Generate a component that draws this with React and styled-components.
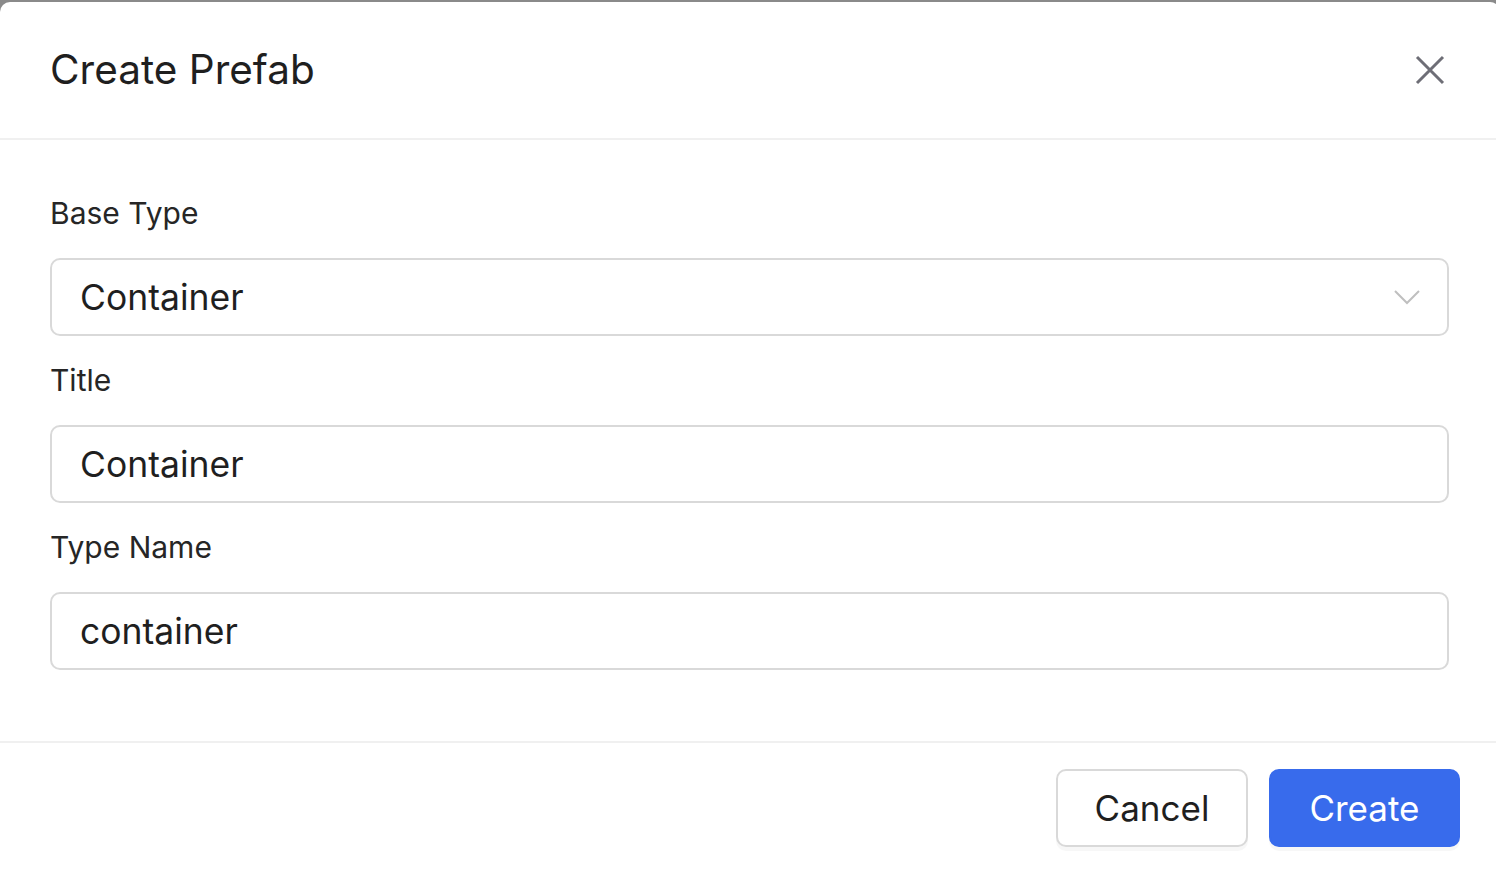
import React from 'react'
import styled, { createGlobalStyle } from 'styled-components'

const GlobalStyle = createGlobalStyle`
  html, body {
    margin: 0;
    padding: 0;
    background: #8a8a8a;
    font-family: Inter, "Noto Sans", sans-serif;
    overflow: hidden;
  }
`

const Modal = styled.div`
  margin: 2px -4px 0 0;
  height: calc(100vh - 2px);
  background: #fff;
  border-radius: 10px 10px 0 0;
  display: flex;
  flex-direction: column;
  color: #1f1f1f;
`

const Header = styled.div`
  height: 136px;
  padding: 0 54px 0 50px;
  display: flex;
  align-items: center;
  justify-content: space-between;
  border-bottom: 2px solid #f0f0f0;
`

const Title = styled.div`
  font-size: 40.5px;
  line-height: 48px;
  color: #1f1f1f;
`

const CloseButton = styled.button`
  border: none;
  background: none;
  padding: 0;
  width: 32px;
  height: 32px;
  display: flex;
  align-items: center;
  justify-content: center;
  cursor: pointer;
`

const Body = styled.div`
  padding: 53px 51px 71px 50px;
  display: flex;
  flex-direction: column;
  gap: 24px;
  border-bottom: 2px solid #f0f0f0;
`

const Field = styled.div`
  display: flex;
  flex-direction: column;
  gap: 25px;
`

const Label = styled.div`
  font-size: 30px;
  line-height: 40px;
  color: #262626;
`

const Box = styled.div`
  height: 78px;
  box-sizing: border-box;
  border: 2px solid #d9d9d9;
  border-radius: 10px;
  padding: 0 26px 0 28px;
  display: flex;
  align-items: center;
  justify-content: space-between;
  font-size: 35.5px;
  color: #1f1f1f;
`

const Footer = styled.div`
  padding: 26px 40px 0 0;
  display: flex;
  justify-content: flex-end;
  gap: 21px;
`

const Button = styled.button`
  height: 78px;
  width: ${p => p.$w}px;
  box-sizing: border-box;
  border-radius: 10px;
  font-family: Inter, "Noto Sans", sans-serif;
  font-size: 35px;
  cursor: pointer;
  border: 2px solid ${p => (p.$primary ? '#386bec' : '#d9d9d9')};
  background: ${p => (p.$primary ? '#386bec' : '#fff')};
  color: ${p => (p.$primary ? '#fff' : '#1f1f1f')};
  box-shadow: 0 4px 0 rgba(0, 0, 0, 0.03);
`

const Chevron = () => (
  <svg width="28" height="18" viewBox="0 0 28 18" fill="none">
    <path d="M2 3 L14 15 L26 3" stroke="#bfbfbf" strokeWidth="2" />
  </svg>
)

const CloseIcon = () => (
  <svg width="30" height="30" viewBox="0 0 30 30" fill="none">
    <path d="M2 2 L28 28 M28 2 L2 28" stroke="#6e6e76" strokeWidth="3" />
  </svg>
)

export default function App() {
  return (
    <>
      <GlobalStyle />
      <Modal>
        <Header>
          <Title>Create Prefab</Title>
          <CloseButton>
            <CloseIcon />
          </CloseButton>
        </Header>
        <Body>
          <Field>
            <Label>Base Type</Label>
            <Box>
              Container
              <Chevron />
            </Box>
          </Field>
          <Field>
            <Label>Title</Label>
            <Box>Container</Box>
          </Field>
          <Field>
            <Label>Type Name</Label>
            <Box>container</Box>
          </Field>
        </Body>
        <Footer>
          <Button $w={192}>Cancel</Button>
          <Button $w={191} $primary>Create</Button>
        </Footer>
      </Modal>
    </>
  )
}
